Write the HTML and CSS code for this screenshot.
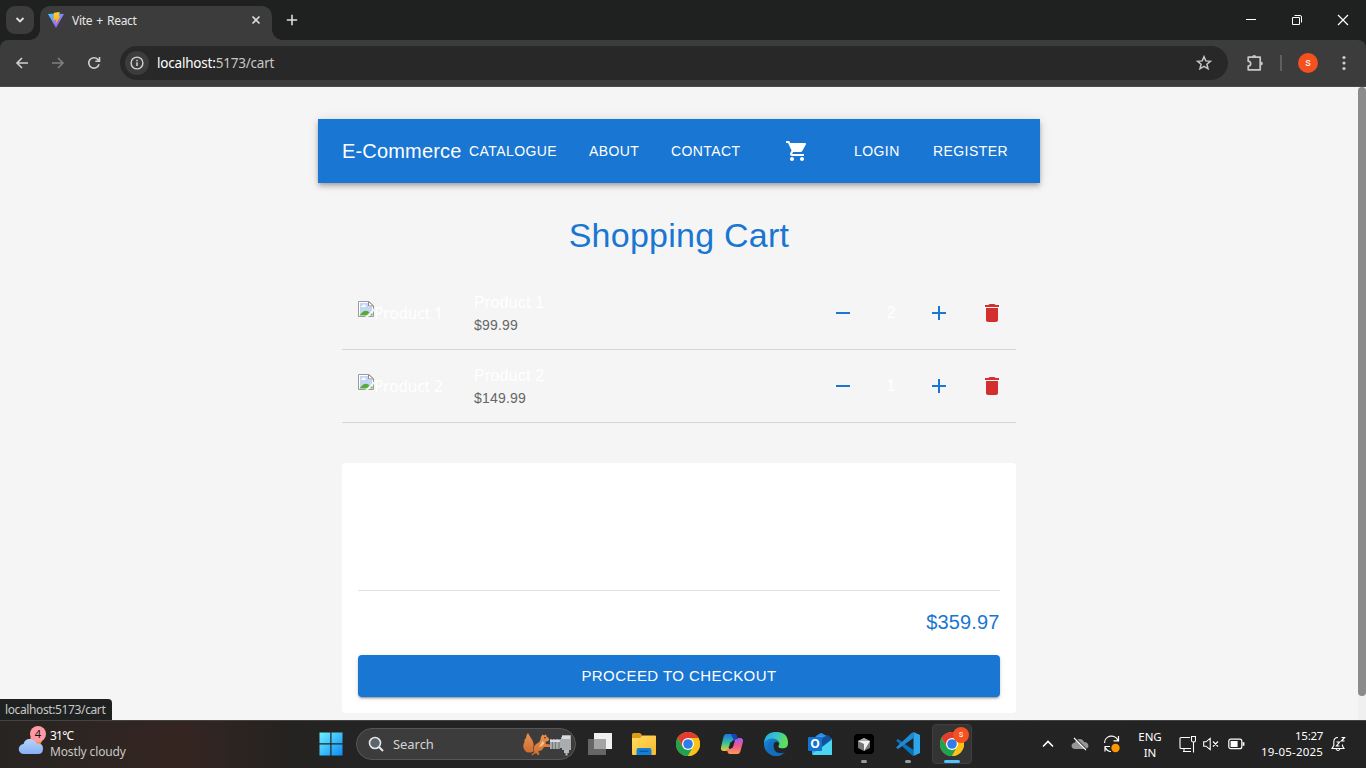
FILE: index.html
```html
<!DOCTYPE html>
<html lang="en">
<head>
<meta charset="utf-8">
<title>Vite + React</title>
<link rel="stylesheet" href="styles.css">
</head>
<body>
<svg class="defs" width="0" height="0">
  <defs>
    <linearGradient id="viteA" x1="0" y1="0" x2="1" y2="1"><stop offset="0" stop-color="#41d1ff"/><stop offset="1" stop-color="#bd34fe"/></linearGradient>
    <linearGradient id="viteB" x1="0" y1="0" x2="0" y2="1"><stop offset="0" stop-color="#ffd62e"/><stop offset="1" stop-color="#ff9d00"/></linearGradient>
    <linearGradient id="win" x1="0" y1="0" x2="1" y2="1"><stop offset="0" stop-color="#6ff0ff"/><stop offset="1" stop-color="#0a8cf5"/></linearGradient>
    <linearGradient id="sky" x1="0" y1="0" x2="0" y2="1"><stop offset="0" stop-color="#b9d3fb"/><stop offset="1" stop-color="#86b0f5"/></linearGradient>
    <linearGradient id="folder" x1="0" y1="0" x2="1" y2="1"><stop offset="0" stop-color="#ffdc62"/><stop offset="1" stop-color="#f8b92c"/></linearGradient>
    <linearGradient id="copA" x1="0" y1="0" x2="0" y2="1"><stop offset="0" stop-color="#1e73e6"/><stop offset=".5" stop-color="#2fbfa0"/><stop offset="1" stop-color="#f0c929"/></linearGradient>
    <linearGradient id="copB" x1="0" y1="0" x2="0" y2="1"><stop offset="0" stop-color="#a35cf0"/><stop offset=".5" stop-color="#ef5a8e"/><stop offset="1" stop-color="#ff9a52"/></linearGradient>
    <linearGradient id="edgeA" x1="0" y1="0" x2="1" y2=".3"><stop offset="0" stop-color="#22a7dd"/><stop offset=".5" stop-color="#35c1cf"/><stop offset="1" stop-color="#63e04f"/></linearGradient>
    <linearGradient id="edgeB" x1="0" y1="0" x2="1" y2="1"><stop offset="0" stop-color="#1b8fe0"/><stop offset="1" stop-color="#0b4f9e"/></linearGradient>
    <linearGradient id="mail" x1="0" y1="0" x2="1" y2="1"><stop offset="0" stop-color="#2a86dc"/><stop offset="1" stop-color="#3dd6f5"/></linearGradient>
    <linearGradient id="fur" x1="0" y1="0" x2="0" y2="1"><stop offset="0" stop-color="#eb9350"/><stop offset="1" stop-color="#cd6c30"/></linearGradient>
    <symbol id="chrome" viewBox="0 0 24 24">
      <circle cx="12" cy="12" r="12" fill="#fbc116"/>
      <path d="M12 6H22.4A12 12 0 0 0 1.6 6L6.8 15z" fill="#e33b2e"/>
      <path d="M1.6 6A12 12 0 0 0 12 24L17.2 15 12 18 6.8 15z" fill="#1fa350"/>
      <path d="M12 6H22.4A12 12 0 0 1 12 24L17.2 15z" fill="#fbc116"/>
      <circle cx="12" cy="12" r="6" fill="#fff"/><circle cx="12" cy="12" r="4.8" fill="#2f7de9"/>
    </symbol>
    <symbol id="minus" viewBox="0 0 24 24"><path d="M19 13H5v-2h14z"/></symbol>
    <symbol id="plus" viewBox="0 0 24 24"><path d="M19 13h-6v6h-2v-6H5v-2h6V5h2v6h6z"/></symbol>
    <symbol id="trash" viewBox="0 0 24 24"><path d="M6 19c0 1.1.9 2 2 2h8c1.100 0 2-.9 2-2V7H6zM19 4h-3.500l-1-1h-5l-1 1H5v2h14z"/></symbol>
    <symbol id="broken" viewBox="0 0 16 16">
      <path d="M.5.500H11L15.500 5V15.500H.5z" fill="#fff" stroke="#9a9a9a"/>
      <path d="M2 2h8v4h4v8H2z" fill="#c4d6f6"/>
      <path d="M3 6q0-1.500 1.500-1.500Q5 3 6.500 3.500T8 6z" fill="#fff"/>
      <path d="M1.500 14.500Q7 6.500 12 12l-2 2.500z" fill="#54ab38"/>
      <path d="M10.500.5V5H15.500z" fill="#fff" stroke="#8c8c8c"/>
      <path d="M7 16L16 7.500v2.500L10 16z" fill="#f5f5f5"/>
      <path d="M12 14.500l2.500-2.500v2.500z" fill="#54ab38"/>
    </symbol>
  </defs>
</svg>

<header class="tabstrip">
  <div class="tab-search"><svg width="10" height="8" viewBox="0 0 10 8"><path d="M1.500 2L5 5.500 8.500 2" class="line thick"/></svg></div>
  <div class="tab">
    <svg width="16" height="16" viewBox="0 0 16 16"><path d="M0 2L8 1.500 16 2 8 16z" fill="url(#viteA)"/><path d="M6 .8L11.800 0 10.500 4.500 12.400 4.200 7.500 12.500 8.200 7.800 5.400 8.200z" fill="url(#viteB)"/></svg>
    <span class="tab-title">Vite + React</span>
    <svg width="10" height="10" viewBox="0 0 10 10"><path d="M1.500 1.500l7 7M8.500 1.500l-7 7" class="line"/></svg>
  </div>
  <svg class="new-tab" width="12" height="12" viewBox="0 0 12 12"><path d="M6 .8v10.400M.8 6h10.400" class="line"/></svg>
  <div class="window-buttons">
    <svg width="12" height="12" viewBox="0 0 12 12"><path d="M1 5.500h10" stroke="#fff"/></svg>
    <svg width="12" height="12" viewBox="0 0 12 12"><path d="M1.500 3.500h7v7h-7zM3.500 1.500H9q1.500 0 1.500 1.500v5.500" fill="none" stroke="#fff"/></svg>
    <svg width="12" height="12" viewBox="0 0 12 12"><path d="M1 1l10 10M11 1L1 11" stroke="#fff" stroke-width="1.200"/></svg>
  </div>
</header>

<div class="toolbar">
  <svg width="16" height="16" viewBox="0 0 16 16"><path d="M14 8H3M8 3L3 8l5 5" class="line soft"/></svg>
  <svg class="dim" width="16" height="16" viewBox="0 0 16 16"><path d="M2 8h11M8 3l5 5-5 5" class="line soft"/></svg>
  <svg width="16" height="16" viewBox="0 0 16 16"><path d="M13 9.200A5.200 5.200 0 1 1 11.800 4.400L13.500 6M13.500 2v4.200H9.300" class="line soft"/></svg>
  <div class="omnibox">
    <span class="info"><svg width="14" height="14" viewBox="0 0 14 14"><circle cx="7" cy="7" r="5.900" fill="none" stroke="#d3d3d3" stroke-width="1.400"/><path d="M7 6.200V10M7 3.800v1.400" stroke="#d3d3d3" stroke-width="1.500"/></svg></span>
    <span class="url">localhost:<i>5173/cart</i></span>
    <svg width="16" height="16" viewBox="0 0 16 16"><path d="M8 1.700l1.800 4.200 4.600.4-3.500 3 1.100 4.500L8 11.400l-4 2.400 1.100-4.500-3.500-3 4.600-.4z" fill="none" stroke="#c7c7c7" stroke-width="1.500"/></svg>
  </div>
  <svg class="ext" width="18" height="18" viewBox="0 0 18 18"><path d="M2.200 3.200h12v12.600h-12v-3.600q2.500-.3 2.500-2.400T2.200 7.200z" fill="none" stroke="#c7c7c7" stroke-width="1.700" stroke-linejoin="round"/><path d="M6.200 3a2 2 0 0 1 4 0M14.800 7.400a2 2 0 0 1 0 4" fill="#c7c7c7"/></svg>
  <span class="divider"></span>
  <span class="avatar">s</span>
  <svg class="kebab" width="4" height="16" viewBox="0 0 4 16" fill="#ccc"><circle cx="2" cy="2.500" r="1.600"/><circle cx="2" cy="8" r="1.600"/><circle cx="2" cy="13.500" r="1.600"/></svg>
</div>

<main class="viewport">
  <div class="page">
    <nav class="navbar">
      <span class="brand">E-Commerce</span>
      <a class="catalogue">CATALOGUE</a><a class="about">ABOUT</a><a class="contact">CONTACT</a>
      <svg class="cart" width="24" height="24" viewBox="0 0 24 24" fill="#fff"><path d="M7 18c-1.100 0-1.990.9-1.990 2S5.900 22 7 22s2-.9 2-2-.9-2-2-2M1 2v2h2l3.600 7.590-1.350 2.450c-.16.280-.25.610-.25.960 0 1.100.9 2 2 2h12v-2H7.420c-.14 0-.25-.11-.25-.25l.03-.12.900-1.630h7.450c.75 0 1.410-.41 1.750-1.030l3.580-6.490c.08-.14.120-.31.120-.48 0-.55-.45-1-1-1H5.210l-.94-2zm16 16c-1.100 0-1.990.9-1.990 2s.89 2 1.990 2 2-.9 2-2-.9-2-2-2"/></svg>
      <a class="login">LOGIN</a><a class="register">REGISTER</a>
    </nav>
    <section class="content">
      <h1>Shopping Cart</h1>
      <div class="item">
        <div class="thumb"><svg width="16" height="16"><use href="#broken"/></svg><span>Product 1</span></div>
        <div class="info-text"><p class="name">Product 1</p><p class="price">$99.99</p></div>
        <svg class="blue" width="24" height="24"><use href="#minus"/></svg>
        <span class="qty">2</span>
        <svg class="blue" width="24" height="24"><use href="#plus"/></svg>
        <svg class="red" width="24" height="24"><use href="#trash"/></svg>
      </div>
      <div class="item">
        <div class="thumb"><svg width="16" height="16"><use href="#broken"/></svg><span>Product 2</span></div>
        <div class="info-text"><p class="name">Product 2</p><p class="price">$149.99</p></div>
        <svg class="blue" width="24" height="24"><use href="#minus"/></svg>
        <span class="qty">1</span>
        <svg class="blue" width="24" height="24"><use href="#plus"/></svg>
        <svg class="red" width="24" height="24"><use href="#trash"/></svg>
      </div>
      <div class="summary">
        <div class="total">$359.97</div>
        <button class="checkout">PROCEED TO CHECKOUT</button>
      </div>
    </section>
  </div>
  <div class="scrollbar"><div class="thumb-bar"></div></div>
  <div class="status">localhost:5173/cart</div>
</main>

<footer class="taskbar">
  <div class="weather">
    <svg width="30" height="32" viewBox="0 0 30 32"><circle cx="18" cy="16" r="6" fill="#f7931e"/><path d="M6 30a5 5 0 0 1-.5-10Q7 14.500 12.500 15q5 .3 6.500 4.500 6-.5 6 5Q25 30 20 30z" fill="url(#sky)"/><circle cx="20" cy="10" r="8" fill="#ff99a4"/><text x="20" y="14" class="count">4</text></svg>
    <div class="weather-text"><b>31°C</b><span>Mostly cloudy</span></div>
  </div>
  <div class="apps">
    <span class="cell"><svg width="24" height="24" viewBox="0 0 24 24"><path d="M.5.500H11.300V11.300H.5zM12.500.500H23.500V11.300H12.500zM.5 12.500H11.300V23.500H.5zM12.500 12.500H23.500V23.500H12.500z" fill="url(#win)"/></svg></span>
    <div class="search">
      <svg width="16" height="16" viewBox="0 0 16 16"><circle cx="7" cy="7" r="5.500" fill="#5a656c" stroke="#e8e8e8" stroke-width="1.600"/><path d="M11 11l4 4" stroke="#e8e8e8" stroke-width="2"/></svg>
      <span>Search</span>
      <svg width="50" height="26" viewBox="0 0 50 26">
        <path d="M6 2Q7.500 5 9 7 13 13 11 17 13 21 9 21.500 4 22 2.500 19 0 15 2.500 11 1.500 9 4 7 4 4 6 2z" fill="url(#fur)"/>
        <path d="M9.500 23Q13 22 12 19 11 14.500 15 12.500 18 11 18.500 8.500L19 6 20.500 3.500 22 4.500 24 3.500 24.500 5.500Q27.500 7 27 9.500L23.500 11 24 13 28 13.500 28 16 22 16 20 19 16 20.500 17.500 22.500 16.500 24.500 14 22 10 24.500z" fill="url(#fur)"/>
        <path d="M20.500 10q-1.500 3-3.500 6l3-1 2.500-3z" fill="#f2c48f"/><circle cx="23" cy="6.800" r=".8" fill="#43210f"/>
        <path d="M28 8h11V6h1V4h8q1 0 1 1v14h-9v-2h-2v1H28z" fill="#a9adb0"/><path d="M30.500 8v10M33.500 8v10M37 8v10" stroke="#737b7f" stroke-width="1.200"/><path d="M40 5h8v3h-8zM28 9h10v2H28z" fill="#d9dcde"/><path d="M42 19h5v3h-1.500v2.500h-2V22H42z" fill="#b5babc"/>
      </svg>
    </div>
    <span class="cell first"><svg width="24" height="24" viewBox="0 0 24 24"><path d="M6 1h18v16H6z" fill="#f0f0f0"/><path d="M0 7h18v16H0z" fill="#666"/><path d="M6 7h12v10H6z" fill="#a4a4a4"/></svg></span>
    <span class="cell"><svg width="24" height="24" viewBox="0 0 24 24"><path d="M0 2.500Q0 1 1.500 1H8l2 2v5H0z" fill="#dc9b13"/><path d="M0 6h8l2.500-2.500H23q1 0 1 1V22q0 1-1 1H1q-1 0-1-1z" fill="url(#folder)"/><path d="M4.500 23v-5q0-2 2-2h11q2 0 2 2v5z" fill="#1180d6"/><path d="M7.500 19.300h9" stroke="#075aa5" stroke-width="1.500"/></svg></span>
    <span class="cell"><svg width="24" height="24"><use href="#chrome"/></svg></span>
    <span class="cell"><svg width="24" height="24" viewBox="0 0 24 24"><path d="M6 2h8q2 0 2.500 2L18 8h-4q-2 0-3 3l-2 6q-.8 2-3 2H4Q0 19 1.200 14.500L3.500 5Q4.300 2 6 2z" fill="url(#copA)"/><path d="M18 22h-8q-2 0-2.500-2L7 17h3q2 0 3-3l2-6q.8-2 3-2h2q4 0 2.800 4.500L20.500 19Q19.700 22 18 22z" fill="url(#copB)"/><path d="M11 2h4q1.500 0 2 2l1 3q-3 0-4 2z" fill="#1545b8"/><path d="M10.500 10h4l-2 6h-4z" fill="#242424"/></svg></span>
    <span class="cell"><svg width="24" height="24" viewBox="0 0 24 24"><circle cx="12" cy="12" r="12" fill="url(#edgeB)"/><path d="M0 11Q1 0 12 0q12 0 12 11 0 5-6 5.500-4 0-4-2.500 2-1 1-4-1.500-3-5.500-3.500Q3 6 0 11z" fill="url(#edgeA)"/><path d="M9.500 9Q6 12 8 17q3 6 12 4-4 4-10 2.800Q3 22 3.500 15 4 10 9.500 9z" fill="#156fbf"/><path d="M10 11q3-2.500 5 0 .5 1.500-.8 3 .3 2.500 4.300 2.500 3 0 5-1.500l1.500.5-2.500 4q-3 1.500-6 1.500-5 0-6.500-4.500-.8-3.500 0-5.500z" fill="#242424"/></svg></span>
    <span class="cell"><svg width="24" height="24" viewBox="0 0 24 24"><path d="M13 1l11 6v15q0 1-1 1H6q-2 0-2-2V7z" fill="url(#mail)"/><path d="M13 1l11 6-10 7V4H8z" fill="#2f8fe0"/><path d="M14 6l6-3 4 4-10 8z" fill="#124f9c"/><path d="M13 16l11-8v14q0 1-1 1H6q-1 0-2-1z" fill="#4ad5f3"/><rect y="5" width="14" height="14" rx="1" fill="#1472cf"/><text x="7" y="16" class="o">O</text></svg></span>
    <span class="cell running"><svg width="20" height="20" viewBox="0 0 20 20"><rect width="20" height="20" rx="4" fill="#000"/><path d="M10 4l6 3v7l-6 3-6-3V7z" fill="#777"/><path d="M4 7h12l-6 10v-7z" fill="#f2f2f2"/><path d="M10 4l6 3H4z" fill="#aaa"/></svg></span>
    <span class="cell running"><svg width="24" height="24" viewBox="0 0 24 24"><path d="M2 7L0 8.500 14.500 22l3 2v-6z" fill="#0872bb"/><path d="M2 17l-2-1.500L15 1.500 17.500 0v6z" fill="#1f8bd6"/><path d="M17.500 0L24 3v18l-6.500 3z" fill="#2ba5ee"/></svg></span>
    <span class="cell active"><svg width="24" height="24"><use href="#chrome"/></svg><i class="badge">s</i></span>
  </div>
  <div class="tray">
    <svg class="chevron" width="12" height="8" viewBox="0 0 12 8"><path d="M1 6.500l5-5 5 5" fill="none" stroke="#fff" stroke-width="1.600"/></svg>
    <svg class="cloud" width="18" height="16" viewBox="0 0 18 16"><path d="M4 13q-3 0-3.500-3Q.5 7 4 6.500 5 3 8.500 3T13 6q4 0 4.500 4-.5 3-4 3z" fill="#969696"/><path d="M3.500 1.500l12 12" stroke="#242424" stroke-width="1.500"/><path d="M3 2l12 12" stroke="#fff" stroke-width="1.100"/></svg>
    <svg class="sync" width="18" height="18" viewBox="0 0 18 18"><path d="M1.500 8A7 7 0 0 1 15 5.500M15.500 1v4.800H10.500M2 16.500v-5h5M2 12q2 4.500 6 4.500" fill="none" stroke="#fff" stroke-width="1.200"/><circle cx="12.500" cy="13" r="4.200" fill="#ff9800"/></svg>
    <div class="lang">ENG<br>IN</div>
    <svg class="net" width="17" height="17" viewBox="0 0 17 17"><path d="M11 1.500H2q-1 0-1 1v9q0 1 1 1h10M5 12.500v3M4 15.500h8M12.500.500v4q0 1.500 2 1.500t2-1.500v-4zM14.500 6v10.500" fill="none" stroke="#fff" stroke-width="1.100"/></svg>
    <svg class="sound" width="16" height="14" viewBox="0 0 16 14"><path d="M.7 4.800H3L7.200 1.300v11.400L3 9.200H.7zM10 4.500l5 5M15 4.500l-5 5" fill="none" stroke="#fff" stroke-width="1.100"/></svg>
    <svg class="battery" width="17" height="12" viewBox="0 0 17 12"><rect x=".8" y="1.200" width="13" height="9.500" rx="2" fill="none" stroke="#fff" stroke-width="1.200"/><rect x="2.600" y="3" width="7" height="6" fill="#fff"/><path d="M15.500 4.200v3.600" stroke="#fff" stroke-width="1.800"/></svg>
    <div class="clock">15:27<br><span>19-05-2025</span></div>
    <svg class="bell" width="15" height="16" viewBox="0 0 15 16"><path d="M7 1.500Q2.800 1.500 2.800 6v3.500L1 12.500h12L11.500 10V8.500M5 13q2 3 4 0" fill="none" stroke="#fff" stroke-width="1.100"/><path d="M5.500 6H8.500L5.500 10H8.500M10.500 1.500h3L10.500 5h3" fill="none" stroke="#fff" stroke-width="1.200"/></svg>
  </div>
</footer>
</body>
</html>
```
FILE: styles.css
```css
* { box-sizing: border-box; }
body { margin: 0; width: 1366px; height: 768px; overflow: hidden; display: flex; flex-direction: column; font-family: "Noto Sans", sans-serif; background: #1f2120; }
svg { flex: none; display: block; }
.defs { position: absolute; }
.line { fill: none; stroke: #ddd; stroke-width: 1.6; }
.thick { stroke-width: 1.9; }
.soft { stroke: #cfcfcf; }

.tabstrip { height: 40px; flex: none; display: flex; align-items: center; background: #1f2120; }
.tab-search { width: 28px; height: 28px; margin-left: 6px; border-radius: 9px; background: #3c3c3c; display: flex; align-items: center; justify-content: center; }
.tab { position: relative; align-self: flex-end; width: 232px; height: 34px; margin-left: 6px; padding: 0 11px 6px 8px; border-radius: 10px 10px 0 0; background: #3c3c3c; display: flex; align-items: center; }
.tab::before, .tab::after { content: ""; position: absolute; bottom: 0; width: 10px; height: 10px; }
.tab::before { left: -10px; background: radial-gradient(circle at 0 0, transparent 9.5px, #3c3c3c 10px); }
.tab::after { right: -10px; background: radial-gradient(circle at 100% 0, transparent 9.5px, #3c3c3c 10px); }
.tab-title { flex: 1; margin-left: 8px; font-size: 12px; letter-spacing: -.32px; word-spacing: 1.4px; color: #e6e6e6; }
.new-tab { margin-left: 14px; }
.window-buttons { margin-left: auto; display: flex; gap: 34px; padding-right: 17px; }

.toolbar { height: 47px; flex: none; display: flex; align-items: center; padding: 0 20px 1px 14px; background: #3c3c3c; border-bottom: 1px solid #4a4a4a; border-radius: 8px 8px 0 0; }
.toolbar > svg + svg { margin-left: 20px; }
.dim { opacity: .45; }
.omnibox { width: 1108px; height: 34px; margin-left: 18px; padding: 0 16px 0 5px; border-radius: 17px; background: #282828; display: flex; align-items: center; }
.info { width: 24px; height: 24px; border-radius: 50%; background: #3c3c3c; display: flex; align-items: center; justify-content: center; }
.url { flex: 1; margin-left: 8px; font-size: 13.5px; letter-spacing: -.2px; color: #fff; }
.url i { font-style: normal; color: #c7c7c7; }
.ext { margin-left: 18px; }
.divider { width: 2px; height: 16px; margin-left: 16px; background: #5f5f5f; }
.avatar { width: 20px; height: 20px; margin-left: 16px; border-radius: 50%; background: #f4511e; color: #fff; font: 11px/19px Roboto, sans-serif; text-align: center; }
.kebab { margin-left: 24px; }

.viewport { position: relative; height: 633px; flex: none; display: flex; background: #f5f5f5; font-family: "Liberation Sans", Arial, sans-serif; overflow: hidden; }
.page { flex: 1; padding-top: 32px; display: flex; flex-direction: column; align-items: center; }
.navbar { width: 722px; height: 64px; flex: none; padding: 0 31px 0 24px; display: flex; align-items: center; background: #1976d2; color: #fff; font-size: 14px; letter-spacing: .42px; box-shadow: 0 2px 4px -1px rgba(0,0,0,.2), 0 4px 5px rgba(0,0,0,.14), 0 1px 10px rgba(0,0,0,.12); }
.brand { width: 127px; font-size: 20px; letter-spacing: .17px; }
.catalogue { width: 120px; }
.about { width: 82px; }
.contact { width: 114px; }
.login { width: 79px; margin-left: 45px; }
.content { width: 674px; }
h1 { margin: 31px 0 21px; font-size: 34px; font-weight: 400; line-height: 42px; letter-spacing: .25px; text-align: center; color: #1976d2; }
.item { height: 73px; padding: 0 12px 0 16px; display: flex; align-items: center; border-bottom: 1px solid #d5d5d5; color: #fff; }
.thumb { width: 116px; display: flex; font: 15.5px/20px "Noto Sans", sans-serif; letter-spacing: -.13px; }
.thumb svg { margin-top: -2px; }
.thumb span { white-space: nowrap; }
.info-text { width: 357px; }
.info-text p { margin: 0; }
.name { font-size: 16px; line-height: 24px; letter-spacing: .2px; }
.price { font-size: 14px; line-height: 21px; letter-spacing: .2px; color: #666; }
.qty { width: 72px; font-size: 16px; text-align: center; }
.blue { fill: #1976d2; }
.red { fill: #d32f2f; margin-left: 29px; }
.summary { height: 250px; margin-top: 40px; padding: 127px 16px 16px; border-radius: 4px; background: #fff; }
.total { height: 65px; padding-right: .5px; border-top: 1px solid #e0e0e0; color: #1976d2; font-size: 20px; line-height: 63px; letter-spacing: .15px; text-align: right; }
.checkout { display: block; width: 100%; height: 42px; padding: 0 0 2px; border: 0; border-radius: 4px; background: #1976d2; color: #fff; font: 15px "Liberation Sans", Arial, sans-serif; letter-spacing: .43px; box-shadow: 0 3px 1px -2px rgba(0,0,0,.2), 0 2px 2px rgba(0,0,0,.14), 0 1px 5px rgba(0,0,0,.12); }
.scrollbar { width: 8px; background: #f0f0f0; }
.thumb-bar { height: 609px; border-radius: 4px; background: #8b8b8b; }
.status { position: absolute; left: 0; bottom: 0; width: 112px; height: 21px; padding-left: 5px; border-radius: 0 4px 0 0; background: #1f2120; color: #c7c7c7; font: 12px/21px "Noto Sans", sans-serif; letter-spacing: -.38px; white-space: nowrap; }

.taskbar { height: 48px; flex: none; display: flex; border-top: 1px solid #434343; color: #fff; background: linear-gradient(90deg, #272522 0, #352521 180px, #242321 290px, #242424 360px, #232323 100%); }
.weather { width: 309px; padding: 3px 0 0 18px; display: flex; }
.weather-text { display: flex; flex-direction: column; margin: 4px 0 0 2px; font-size: 12px; line-height: 16px; letter-spacing: -.14px; }
.weather-text b { font-weight: 400; letter-spacing: -.8px; }
.weather-text span { color: #c8c8c8; }
.count { fill: #111; font: 11px "Noto Sans", sans-serif; text-anchor: middle; }
.apps { display: flex; align-items: center; width: 665px; height: 45px; }
.cell { position: relative; width: 44px; height: 45px; flex: none; display: flex; align-items: center; justify-content: center; }
.first { margin-left: 2px; }
.search { width: 220px; height: 32px; margin-left: 3px; padding: 0 3px 0 11px; border: 1px solid #565656; border-radius: 16px; background: #3c3c3c; display: flex; align-items: center; }
.search span { flex: 1; margin-left: 9px; font-size: 13px; letter-spacing: -.05px; color: #d5d5d5; }
.running::after, .active::after { content: ""; position: absolute; bottom: 3px; left: 19px; width: 6px; height: 3px; border-radius: 2px; background: #9b9b9b; }
.active::before { content: ""; position: absolute; inset: 3px 2px 2px; border: 1px solid #404040; border-radius: 4px; background: #343434; }
.active svg { position: relative; }
.active::after { left: 14px; width: 16px; background: #4cc2ff; }
.badge { position: absolute; left: 23px; top: 6px; width: 16px; height: 16px; border-radius: 50%; background: #f4511e; color: #fff; font: 9px/15px Roboto, sans-serif; text-align: center; }
.o { fill: #fff; font: bold 12px "Open Sans", sans-serif; text-anchor: middle; }
.tray { flex: 1; height: 46px; margin-left: 68px; display: flex; align-items: center; font-size: 11.5px; line-height: 16px; letter-spacing: -.3px; }
.cloud { margin-left: 17px; }
.sync { margin-left: 14px; }
.lang { width: 30px; margin-left: 14px; padding-top: 1px; text-align: center; letter-spacing: 0; }
.net { margin-left: 14px; }
.sound { margin-left: 7px; }
.battery { margin-left: 9px; }
.clock { width: 70px; margin-left: 8px; text-align: right; white-space: nowrap; }
.clock span { letter-spacing: .2px; }
.bell { margin-left: 8px; }
```
